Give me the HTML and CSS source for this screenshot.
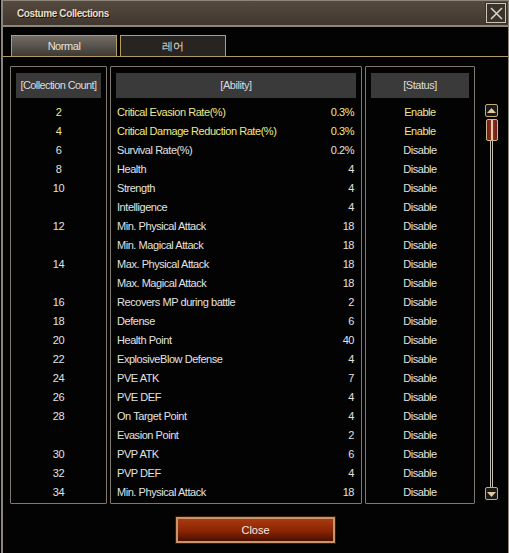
FILE: index.html
```html
<html>
  <head>
    <link rel="stylesheet" href="styles.css">
  </head>
  <body>
    <div class="window">
      <div class="titlebar">
        <span class="title">Costume Collections</span>
        <button class="x-btn">
          <svg width="13" height="13" viewBox="0 0 13 13"><path d="M1 1 L12 12 M12 1 L1 12" stroke="#d8d0c0" stroke-width="1.6"/></svg>
        </button>
      </div>

      <div class="tabs">
        <div class="tab active">Normal</div>
        <div class="tab">레어</div>
      </div>

      <div class="content">
        <div class="panel col-count">
          <div class="head">[Collection Count]</div>
          <div class="rows" id="countRows"></div>
        </div>
        <div class="panel col-ability">
          <div class="head">[Ability]</div>
          <div class="rows" id="abilityRows"></div>
        </div>
        <div class="panel col-status">
          <div class="head">[Status]</div>
          <div class="rows" id="statusRows"></div>
        </div>
        <div class="scrollbar">
          <div class="sb-btn"><svg width="9" height="6" viewBox="0 0 9 6"><path d="M4.5 0 L9 5 L0 5 Z" fill="#e0c8a0"/></svg></div>
          <div class="sb-thumb"></div>
          <div class="sb-track"></div>
          <div class="sb-btn"><svg width="9" height="6" viewBox="0 0 9 6"><path d="M0 1 L9 1 L4.5 6 Z" fill="#e0c8a0"/></svg></div>
        </div>
      </div>

      <div class="footer">
        <button class="close-btn">Close</button>
      </div>
    </div>

    <script>
      // count, ability, value, enabled
      const data = [
        ["2", "Critical Evasion Rate(%)", "0.3%", true],
        ["4", "Critical Damage Reduction Rate(%)", "0.3%", true],
        ["6", "Survival Rate(%)", "0.2%", false],
        ["8", "Health", "4", false],
        ["10", "Strength", "4", false],
        ["", "Intelligence", "4", false],
        ["12", "Min. Physical Attack", "18", false],
        ["", "Min. Magical Attack", "18", false],
        ["14", "Max. Physical Attack", "18", false],
        ["", "Max. Magical Attack", "18", false],
        ["16", "Recovers MP during battle", "2", false],
        ["18", "Defense", "6", false],
        ["20", "Health Point", "40", false],
        ["22", "ExplosiveBlow Defense", "4", false],
        ["24", "PVE ATK", "7", false],
        ["26", "PVE DEF", "4", false],
        ["28", "On Target Point", "4", false],
        ["", "Evasion Point", "2", false],
        ["30", "PVP ATK", "6", false],
        ["32", "PVP DEF", "4", false],
        ["34", "Min. Physical Attack", "18", false]
      ];

      const countRows = document.getElementById("countRows");
      const abilityRows = document.getElementById("abilityRows");
      const statusRows = document.getElementById("statusRows");

      data.forEach(([count, name, value, on]) => {
        const cls = on ? "row on" : "row";
        countRows.innerHTML += `<div class="${cls}">${count}</div>`;
        abilityRows.innerHTML += `<div class="${cls}"><span>${name}</span><span>${value}</span></div>`;
        statusRows.innerHTML += `<div class="${cls}">${on ? "Enable" : "Disable"}</div>`;
      });
    </script>
  </body>
</html>
```

FILE: styles.css
```css
body {
  margin: 0;
  background: #000;
  font-family: "Liberation Sans", Arial, sans-serif;
  font-size: 11px;
  letter-spacing: -0.45px;
  color: #e2e2e2;
}

.window {
  width: 505px;
  height: 553px;
  margin-left: 1px;
  border-left: 2px solid #8c857a;
  border-right: 1px solid #8c857a;
  background: #030303;
  display: flex;
  flex-direction: column;
}

.titlebar {
  height: 27px;
  box-sizing: border-box;
  border-top: 1px solid #8c857a;
  border-bottom: 2px solid #8c857a;
  background: linear-gradient(#564a40, #40372f);
  display: flex;
  align-items: center;
  justify-content: space-between;
  padding: 0 1px 0 14px;
}

.title {
  font-weight: bold;
  font-size: 10px;
  color: #eadcc0;
  letter-spacing: -0.4px;
  text-shadow: 1px 1px 0 #1a140e;
}

.x-btn {
  width: 20px;
  height: 20px;
  padding: 0;
  background: #3a332c;
  border: 1px solid #cfc6b6;
  outline: 1px solid #3a332c;
  display: flex;
  align-items: center;
  justify-content: center;
  margin-right: 1px;
}

.tabs {
  display: flex;
  gap: 3px;
  padding: 8px 0 0 8px;
  border-bottom: 1px solid #b09a62;
  height: 21px;
}

.tab {
  width: 106px;
  box-sizing: border-box;
  border: 1px solid #b39d63;
  border-bottom: none;
  background: #272421;
  color: #e6e2da;
  text-align: center;
  line-height: 21px;
}

.tab.active {
  background: linear-gradient(#726c64, #3d3934);
}

.content {
  display: flex;
  align-items: flex-start;
  padding: 9px 0 0 7px;
  height: 438px;
}

.panel {
  box-sizing: border-box;
  height: 438px;
  border: 1px solid #7e786e;
  border-radius: 1px;
  padding: 6px 5px 0;
  margin-right: 3px;
}

.col-count { width: 97px; }
.col-ability { width: 252px; }
.col-status { width: 110px; margin-right: 0; }

.head {
  height: 25px;
  line-height: 25px;
  background: #3a3a3a;
  color: #dcdcdc;
  text-align: center;
  white-space: nowrap;
  overflow: hidden;
}

.col-count .head { letter-spacing: -0.6px; }

.rows {
  padding-top: 5px;
}

.row {
  height: 19px;
  line-height: 19px;
  text-align: center;
  white-space: nowrap;
}

.row.on {
  color: #ecea8a;
}

.col-ability .row {
  display: flex;
  justify-content: space-between;
  padding: 0 2px 0 1px;
  text-align: left;
}

.scrollbar {
  margin-left: 10px;
  margin-top: 38px;
  width: 13px;
  height: 396px;
  display: flex;
  flex-direction: column;
  align-items: center;
}

.sb-btn {
  width: 13px;
  height: 13px;
  box-sizing: border-box;
  border: 1px solid #c2aa7a;
  border-radius: 2px;
  background: #1c1a17;
  display: flex;
  align-items: center;
  justify-content: center;
}

.sb-thumb {
  margin-top: 2px;
  width: 12px;
  height: 22px;
  box-sizing: border-box;
  border: 1px solid #d0b884;
  border-radius: 2px;
  background: linear-gradient(90deg, #6a1e12 0, #8c3222 40%, #e8c8a8 45%, #e8c8a8 55%, #8c3222 60%, #6a1e12 100%);
}

.sb-track {
  flex: 1;
  width: 3px;
  border-left: 1px solid #c8c2b6;
  border-right: 1px solid #c8c2b6;
  box-sizing: border-box;
}

.footer {
  flex: 1;
  display: flex;
  justify-content: center;
  padding-top: 13px;
}

.close-btn {
  width: 159px;
  height: 26px;
  border: 2px solid #c8946a;
  outline: 1px solid #3a1a08;
  background: linear-gradient(#a83a10, #8a2404 55%, #4a1000);
  color: #f4ece0;
  font-family: "Liberation Sans", Arial, sans-serif;
  font-size: 11px;
  cursor: pointer;
}
```
